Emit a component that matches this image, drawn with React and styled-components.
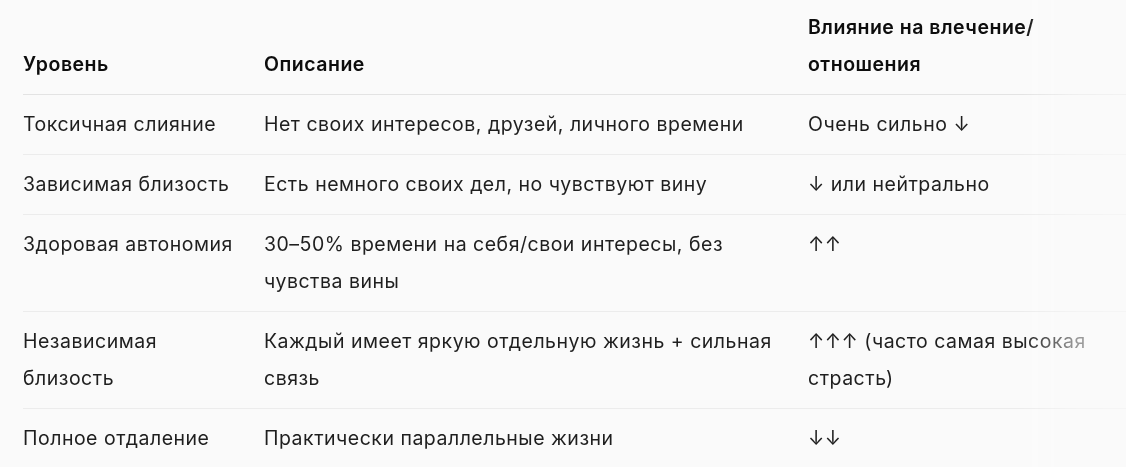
import React from "react";
import styled, { createGlobalStyle } from "styled-components";

const Global = createGlobalStyle`
  html, body { margin: 0; padding: 0; background: #fafafa; }
  body { font-family: Inter, "Noto Sans", sans-serif; color: #0d0d0d; -webkit-font-smoothing: antialiased; }
`;

const Wrap = styled.div`
  width: 1126px;
  height: 467px;
  overflow: hidden;
  background: #fafafa;
  padding-left: 23px;
  box-sizing: border-box;
  -webkit-mask-image: linear-gradient(to right, #000 0, #000 1022px, rgba(0,0,0,0.45) 1075px, rgba(0,0,0,0.35) 1126px);
  mask-image: linear-gradient(to right, #000 0, #000 1022px, rgba(0,0,0,0.45) 1075px, rgba(0,0,0,0.35) 1126px);
`;

const Table = styled.table`
  border-collapse: collapse;
  table-layout: fixed;
  width: 1105px;
  font-size: 19.5px;
  line-height: 37px;
  letter-spacing: 0.5px;
`;

const Th = styled.th`
  text-align: left;
  vertical-align: bottom;
  font-weight: 600;
  padding: 9px ${(p) => p.$pr}px 11px 0;
  border-bottom: 1px solid #e3e3e3;
`;

const Td = styled.td`
  text-align: left;
  vertical-align: top;
  font-weight: 400;
  padding: 11px ${(p) => p.$pr}px 11px 0;
  border-bottom: ${(p) => (p.$last ? "none" : "1px solid #ececec")};
  color: #1f1f1f;
`;

const pads = [20, 28, 30];

const rows = [
  ["Токсичная слияние", "Нет своих интересов, друзей, личного времени", "Очень сильно ↓"],
  ["Зависимая близость", "Есть немного своих дел, но чувствуют вину", "↓ или нейтрально"],
  ["Здоровая автономия", "30–50% времени на себя/свои интересы, без чувства вины", "↑↑"],
  ["Независимая близость", "Каждый имеет яркую отдельную жизнь + сильная связь", "↑↑↑ (часто самая высокая страсть)"],
  ["Полное отдаление", "Практически параллельные жизни", "↓↓"],
];

export default function App() {
  return (
    <>
      <Global />
      <Wrap>
        <Table>
          <colgroup>
            <col style={{ width: 241 }} />
            <col style={{ width: 544 }} />
            <col style={{ width: 320 }} />
          </colgroup>
          <thead>
            <tr>
              <Th $pr={pads[0]}>Уровень</Th>
              <Th $pr={pads[1]}>Описание</Th>
              <Th $pr={pads[2]}>Влияние на влечение/<wbr />отношения</Th>
            </tr>
          </thead>
          <tbody>
            {rows.map((r, i) => (
              <tr key={i}>
                {r.map((c, j) => (
                  <Td key={j} $pr={pads[j]} $last={i === rows.length - 1}>{c}</Td>
                ))}
              </tr>
            ))}
          </tbody>
        </Table>
      </Wrap>
    </>
  );
}
